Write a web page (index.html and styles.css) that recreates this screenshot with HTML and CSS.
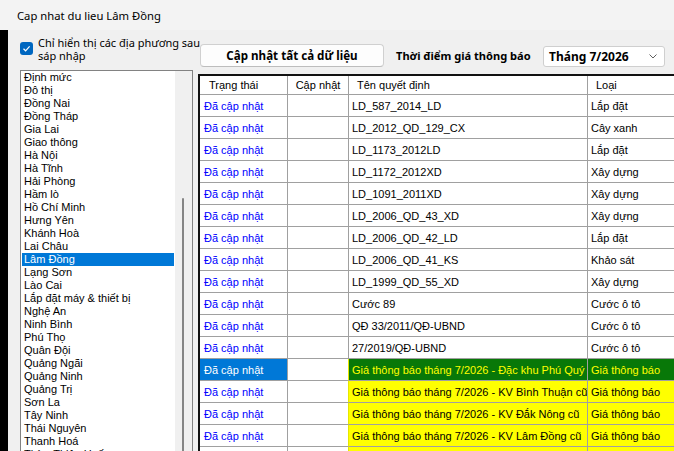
FILE: index.html
```html
<!DOCTYPE html>
<html lang="vi">
<head>
  <meta charset="UTF-8" />
  <meta name="viewport" content="width=device-width, initial-scale=1.0" />
  <title>Cap nhat du lieu Lâm Đồng</title>
  <link rel="stylesheet" href="styles.css">
</head>
<body>
  <div class="titlebar">Cap nhat du lieu Lâm Đồng</div>
  <div class="window">
    <div class="edge"></div>

    <div class="left">
      <label class="check-row">
        <span class="checkbox">
          <svg width="13" height="13" viewBox="0 0 13 13"><polyline points="3.5,6.8 5.6,8.8 9.6,4.4" fill="none" stroke="#fff" stroke-width="1.2" /></svg>
        </span>
        <span class="check-text">Chỉ hiển thị các địa phương sau<br>sáp nhập</span>
      </label>

      <div class="listbox">
        <ul class="list-items">
          <li>Định mức</li>
          <li>Đô thị</li>
          <li>Đồng Nai</li>
          <li>Đồng Tháp</li>
          <li>Gia Lai</li>
          <li>Giao thông</li>
          <li>Hà Nội</li>
          <li>Hà Tĩnh</li>
          <li>Hải Phòng</li>
          <li>Hầm lò</li>
          <li>Hồ Chí Minh</li>
          <li>Hưng Yên</li>
          <li>Khánh Hoà</li>
          <li>Lai Châu</li>
          <li class="selected">Lâm Đồng</li>
          <li>Lạng Sơn</li>
          <li>Lào Cai</li>
          <li>Lắp đặt máy &amp; thiết bị</li>
          <li>Nghệ An</li>
          <li>Ninh Bình</li>
          <li>Phú Thọ</li>
          <li>Quân Đội</li>
          <li>Quảng Ngãi</li>
          <li>Quảng Ninh</li>
          <li>Quảng Trị</li>
          <li>Sơn La</li>
          <li>Tây Ninh</li>
          <li>Thái Nguyên</li>
          <li>Thanh Hoá</li>
          <li>Thừa Thiên Huế</li>
        </ul>
        <div class="vscroll"><div class="thumb"></div></div>
      </div>
    </div>

    <div class="right">
      <div class="toolbar">
        <button class="btn">Cập nhật tất cả dữ liệu</button>
        <span class="toolbar-label">Thời điểm giá thông báo</span>
        <div class="combo">
          <span>Tháng 7/2026</span>
          <svg width="8" height="5" viewBox="0 0 8 5"><polyline points="0.5,0.5 4,4 7.5,0.5" fill="none" stroke="#606060" stroke-width="1" /></svg>
        </div>
      </div>

      <div class="grid">
        <div class="row head">
          <div class="cell c1">Trạng thái</div>
          <div class="cell c2">Cập nhật</div>
          <div class="cell c3">Tên quyết định</div>
          <div class="cell c4">Loại</div>
        </div>
        <div class="row"><div class="cell c1">Đã cập nhật</div><div class="cell c2"></div><div class="cell c3">LD_587_2014_LD</div><div class="cell c4">Lắp đặt</div></div>
        <div class="row"><div class="cell c1">Đã cập nhật</div><div class="cell c2"></div><div class="cell c3">LD_2012_QD_129_CX</div><div class="cell c4">Cây xanh</div></div>
        <div class="row"><div class="cell c1">Đã cập nhật</div><div class="cell c2"></div><div class="cell c3">LD_1173_2012LD</div><div class="cell c4">Lắp đặt</div></div>
        <div class="row"><div class="cell c1">Đã cập nhật</div><div class="cell c2"></div><div class="cell c3">LD_1172_2012XD</div><div class="cell c4">Xây dựng</div></div>
        <div class="row"><div class="cell c1">Đã cập nhật</div><div class="cell c2"></div><div class="cell c3">LD_1091_2011XD</div><div class="cell c4">Xây dựng</div></div>
        <div class="row"><div class="cell c1">Đã cập nhật</div><div class="cell c2"></div><div class="cell c3">LD_2006_QD_43_XD</div><div class="cell c4">Xây dựng</div></div>
        <div class="row"><div class="cell c1">Đã cập nhật</div><div class="cell c2"></div><div class="cell c3">LD_2006_QD_42_LD</div><div class="cell c4">Lắp đặt</div></div>
        <div class="row"><div class="cell c1">Đã cập nhật</div><div class="cell c2"></div><div class="cell c3">LD_2006_QD_41_KS</div><div class="cell c4">Khảo sát</div></div>
        <div class="row"><div class="cell c1">Đã cập nhật</div><div class="cell c2"></div><div class="cell c3">LD_1999_QD_55_XD</div><div class="cell c4">Xây dựng</div></div>
        <div class="row"><div class="cell c1">Đã cập nhật</div><div class="cell c2"></div><div class="cell c3">Cước 89</div><div class="cell c4">Cước ô tô</div></div>
        <div class="row"><div class="cell c1">Đã cập nhật</div><div class="cell c2"></div><div class="cell c3">QĐ 33/2011/QĐ-UBND</div><div class="cell c4">Cước ô tô</div></div>
        <div class="row"><div class="cell c1">Đã cập nhật</div><div class="cell c2"></div><div class="cell c3">27/2019/QĐ-UBND</div><div class="cell c4">Cước ô tô</div></div>
        <div class="row current"><div class="cell c1">Đã cập nhật</div><div class="cell c2"></div><div class="cell c3">Giá thông báo tháng 7/2026 - Đặc khu Phú Quý</div><div class="cell c4">Giá thông báo</div></div>
        <div class="row notice"><div class="cell c1">Đã cập nhật</div><div class="cell c2"></div><div class="cell c3">Giá thông báo tháng 7/2026 - KV Bình Thuận cũ</div><div class="cell c4">Giá thông báo</div></div>
        <div class="row notice"><div class="cell c1">Đã cập nhật</div><div class="cell c2"></div><div class="cell c3">Giá thông báo tháng 7/2026 - KV Đắk Nông cũ</div><div class="cell c4">Giá thông báo</div></div>
        <div class="row notice"><div class="cell c1">Đã cập nhật</div><div class="cell c2"></div><div class="cell c3">Giá thông báo tháng 7/2026 - KV Lâm Đồng cũ</div><div class="cell c4">Giá thông báo</div></div>
        <div class="row notice"><div class="cell c1"></div><div class="cell c2"></div><div class="cell c3"></div><div class="cell c4"></div></div>
      </div>
    </div>
  </div>
</body>
</html>
```

FILE: styles.css
```css
/* Base */
* { margin: 0; padding: 0; box-sizing: border-box; }
html, body { width: 674px; height: 451px; overflow: hidden; }
body { font-family: "Noto Sans", "Liberation Sans", sans-serif; font-size: 11px; color: #000; background: #f0f0f0; }

/* Title bar */
.titlebar { height: 30px; line-height: 31px; padding-left: 17px; font-size: 11.25px; background: #f3f3f3; }

/* Window body */
.window { display: flex; height: 421px; overflow: hidden; }
.edge { width: 8px; background: #000; flex: none; }

/* Left panel */
.left { width: 185px; padding-left: 12px; flex: none; display: flex; flex-direction: column; }
.check-row { display: flex; flex: none; height: 40px; padding-top: 6px; }
.checkbox { width: 13px; height: 13px; margin-top: 6px; border-radius: 3px; background: #0067c0; flex: none; display: flex; }
.check-text { margin-left: 5px; line-height: 13px; white-space: nowrap; }

.listbox { flex: 1; min-height: 0; display: flex; border: 1px solid #828282; border-bottom: none; background: #fff; overflow: hidden; }
.list-items { list-style: none; width: 154px; overflow: hidden; font-family: "Liberation Sans", Arial, sans-serif; font-size: 11px; }
.list-items li { height: 13px; line-height: 13px; margin: 0 1px; padding-left: 2px; white-space: nowrap; }
.list-items li.selected { background: #0078d7; color: #fff; }
.vscroll { flex: 1; background: #f0f0f0; padding-top: 127px; padding-left: 7px; }
.thumb { width: 2px; height: 300px; background: #858585; border-radius: 1px; }

/* Right panel */
.right { margin-left: 5px; flex: 1; overflow: hidden; }
.toolbar { display: flex; align-items: center; padding-top: 14px; height: 37px; }
.btn { width: 184px; height: 23px; margin-left: 2px; font-family: inherit; font-size: 11.6px; font-weight: bold; color: #000; background: #fdfdfd; border: 1px solid #d0d0d0; border-bottom-color: #bdbdbd; border-radius: 4px; }
.toolbar-label { margin-left: 12px; width: 137px; white-space: nowrap; font-size: 11.1px; font-weight: bold; }
.combo { margin-left: 10px; margin-top: 2px; width: 122px; height: 21px; display: flex; align-items: center; justify-content: space-between; padding: 0 7px 0 5px; background: #fff; border: 1px solid #cfcfcf; border-radius: 3px; font-size: 12px; font-weight: bold; }

/* Data grid */
.grid { margin-top: 7px; width: 600px; border-top: 2px solid #111; border-left: 2px solid #111; background: #fff; font-family: "Liberation Sans", Arial, sans-serif; font-size: 11px; }
.row { display: grid; grid-template-columns: 88px 61px 239px 212px; height: 22px; }
.cell { border-right: 1px solid #a0a0a0; border-bottom: 1px solid #a0a0a0; padding: 2px 0 0 3px; line-height: 19px; white-space: nowrap; overflow: hidden; }
.row .c1 { padding-left: 4px; color: #0000ff; }
.row.head { height: 19px; }
.row.head .cell { padding-top: 0; line-height: 18px; padding-left: 8px; color: #000; }
.row.head .c1 { padding-left: 9px; }
.row.head .c2 { padding-left: 0; text-align: center; }

.row.current .c1 { background: #0078d7; color: #fff; }
.row.current .c3,
.row.current .c4 { background: #087808; color: #ffff00; }
.row.notice .c3,
.row.notice .c4 { background: #ffff00; }
.row.current .c2,
.row.notice .c2 { border-right-color: #e6e600; }
```
